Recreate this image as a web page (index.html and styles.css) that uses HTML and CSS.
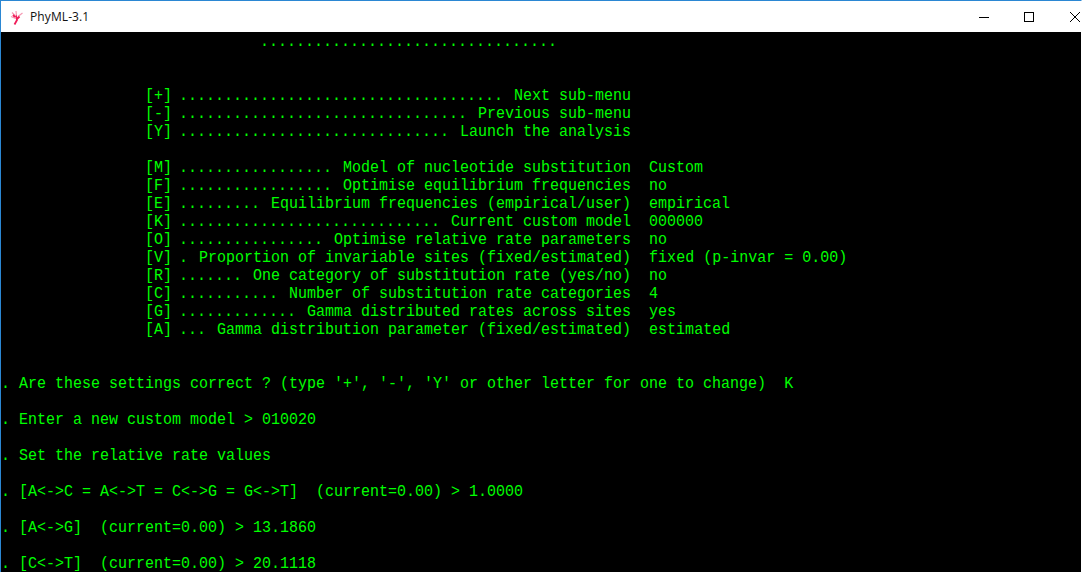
FILE: index.html
```html
<!DOCTYPE html>
<html lang="en">
<head>
<meta charset="utf-8">
<title>PhyML-3.1</title>
<link rel="stylesheet" href="styles.css">
</head>
<body>
<div class="window">
  <header class="titlebar">
    <div class="title-left">
      <svg class="app-icon" width="16" height="16" viewBox="0 0 16 16" aria-hidden="true">
        <path d="M3 3.5L6 6.5M7 2L7.5 7M2 7.5L6.5 9.5M13.5 4L9 7.5" fill="none" stroke="#f59ab4" stroke-width="1.2"/>
        <path d="M5.5 15.5L8 11L7 6.5M8 10L10.5 7.5M6 8L4 6" fill="none" stroke="#f01e5a" stroke-width="1.8"/>
      </svg>
      <span class="title-text">PhyML-3.1</span>
    </div>
    <div class="controls">
      <svg class="ctl" width="45" height="30" viewBox="0 0 45 30" aria-hidden="true"><path d="M17 15.5H27" stroke="#000" fill="none"/></svg>
      <svg class="ctl" width="45" height="30" viewBox="0 0 45 30" aria-hidden="true"><rect x="17.5" y="10.5" width="9" height="9" stroke="#000" fill="none"/></svg>
      <svg class="ctl" width="29" height="30" viewBox="0 0 29 30" aria-hidden="true"><path d="M18 10L28 20M28 10L18 20" stroke="#000" fill="none"/></svg>
    </div>
  </header>
<div class="console">
<pre class="screen">                             <span class="dots">.................................</span>


                [+] <span class="dots">....................................</span> Next sub-menu
                [-] <span class="dots">................................</span> Previous sub-menu
                [Y] <span class="dots">..............................</span> Launch the analysis

                [M] <span class="dots">.................</span> Model of nucleotide substitution  Custom
                [F] <span class="dots">.................</span> Optimise equilibrium frequencies  no
                [E] <span class="dots">.........</span> Equilibrium frequencies (empirical/user)  empirical
                [K] <span class="dots">.............................</span> Current custom model  000000
                [O] <span class="dots">................</span> Optimise relative rate parameters  no
                [V] <span class="dots">.</span> Proportion of invariable sites (fixed/estimated)  fixed (p-invar = 0.00)
                [R] <span class="dots">.......</span> One category of substitution rate (yes/no)  no
                [C] <span class="dots">...........</span> Number of substitution rate categories  4
                [G] <span class="dots">.............</span> Gamma distributed rates across sites  yes
                [A] <span class="dots">...</span> Gamma distribution parameter (fixed/estimated)  estimated


. Are these settings correct ? (type '+', '-', 'Y' or other letter for one to change)  K

. Enter a new custom model &gt; 010020

. Set the relative rate values

. [A&lt;-&gt;C = A&lt;-&gt;T = C&lt;-&gt;G = G&lt;-&gt;T]  (current=0.00) &gt; 1.0000

. [A&lt;-&gt;G]  (current=0.00) &gt; 13.1860

. [C&lt;-&gt;T]  (current=0.00) &gt; 20.1118</pre>
</div>
</div>
</body>
</html>
```
FILE: styles.css
```css
html, body {
  margin: 0;
  padding: 0;
  height: 100%;
  overflow: hidden;
  background: #fff;
}
.window {
  height: 572px;
  display: flex;
  flex-direction: column;
  border-top: 1px solid #2b87d3;
  border-left: 1px solid #2b87d3;
  border-right: 1px solid #fff;
  box-sizing: border-box;
}
.titlebar {
  height: 31px;
  flex: none;
  display: flex;
  justify-content: space-between;
  align-items: center;
  background: #fff;
}
.title-left {
  display: flex;
  align-items: center;
  gap: 5px;
  padding-left: 8px;
}
.app-icon { display: block; }
.title-text {
  font: 12px "Open Sans", "Noto Sans", sans-serif;
  letter-spacing: 0.1px;
  color: #111;
}
.controls { display: flex; }
.ctl { display: block; }
.console {
  flex: 1;
  min-height: 0;
  overflow: hidden;
  background: #000;
  padding-top: 2px;
}
.screen {
  margin: 0;
  color: #00ff00;
  font: 15px/16px "Liberation Mono", monospace;
  white-space: pre;
  transform: scaleY(1.125);
  transform-origin: 0 0;
}
.dots {
  margin-left: -2px;
  margin-right: 2px;
}
```
